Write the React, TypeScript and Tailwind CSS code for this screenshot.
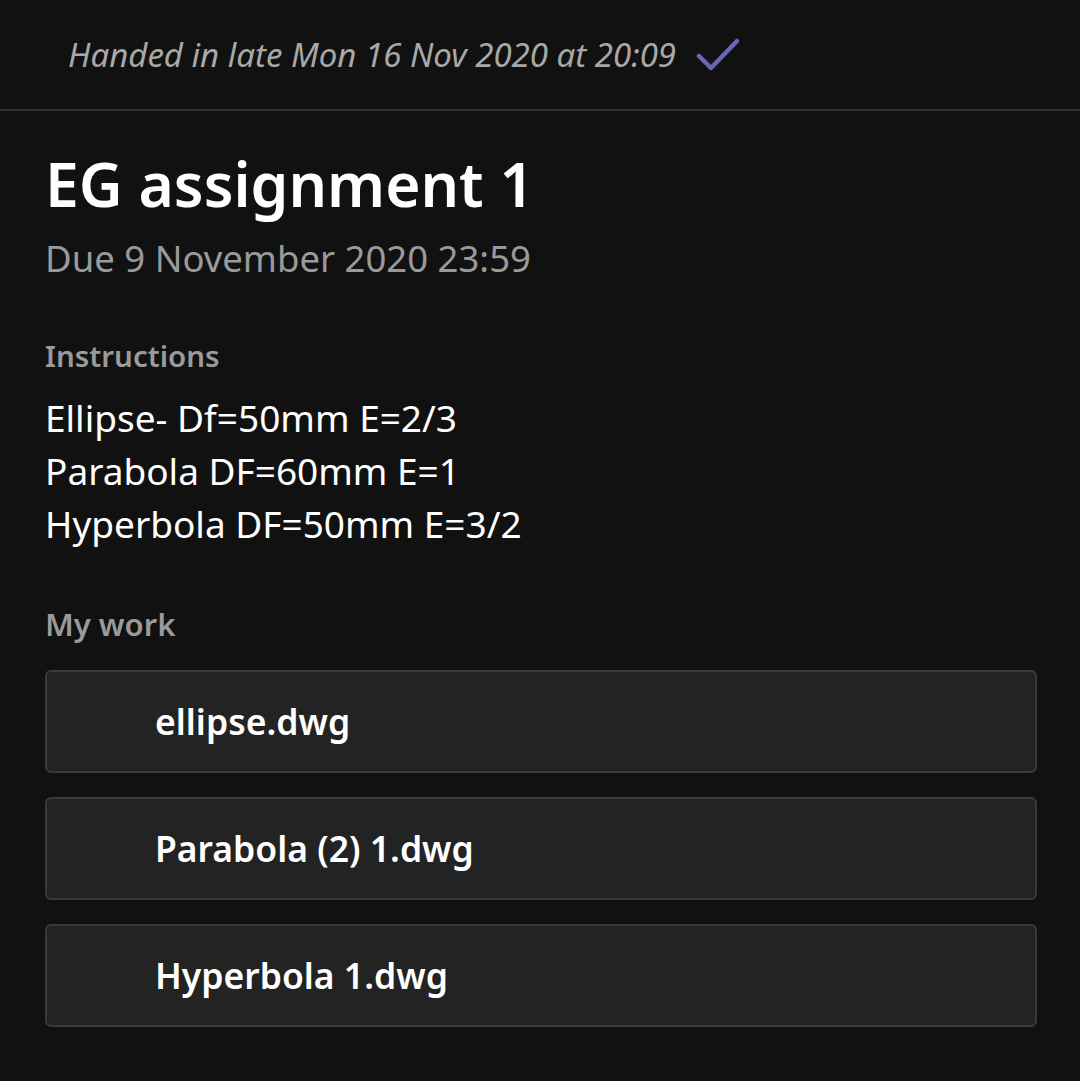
export default function App() {
  const files = ["ellipse.dwg", "Parabola (2) 1.dwg", "Hyperbola 1.dwg"];
  return (
    <div className="min-h-[1081px] w-full bg-[#111111] text-white" style={{ fontFamily: '"Noto Sans", "Open Sans", sans-serif' }}>
      {/* status strip */}
      <div className="flex h-[111px] items-center gap-5 border-b-2 border-[#333333] pl-[68px]">
        <span className="text-[33px] italic text-[#a8a8a8]">Handed in late Mon 16 Nov 2020 at 20:09</span>
        <svg width="44" height="34" viewBox="0 0 44 34" fill="none">
          <path d="M3 18 L15 30 L41 3" stroke="#6767b4" strokeWidth="4.5" strokeLinecap="round" strokeLinejoin="round" />
        </svg>
      </div>

      <div className="px-[45px] pt-[37px]">
        <h1 className="text-[60.5px] font-semibold leading-[72px]">EG assignment 1</h1>
        <div className="mt-[14px] text-[36.5px] leading-[48px] text-[#9a9a9a]">Due 9 November 2020 23:59</div>

        <div className="mt-[54px] text-[29.5px] font-semibold leading-[40px] text-[#9a9a9a]">Instructions</div>
        <div className="mt-[15px] text-[37px] leading-[53px]">
          <div>Ellipse- Df=50mm E=2/3</div>
          <div>Parabola DF=60mm E=1</div>
          <div>Hyperbola DF=50mm E=3/2</div>
        </div>

        <div className="mt-[54px] text-[31px] font-semibold leading-[40px] text-[#9a9a9a]">My work</div>
        <div className="mt-[26px] flex w-[992px] flex-col gap-[24px]">
          {files.map((f) => (
            <div key={f} className="flex h-[103px] items-center rounded-md border-2 border-[#3a3a3a] bg-[#232323] pl-[108px]">
              <span className="text-[35.5px] font-semibold">{f}</span>
            </div>
          ))}
        </div>
      </div>
    </div>
  );
}
